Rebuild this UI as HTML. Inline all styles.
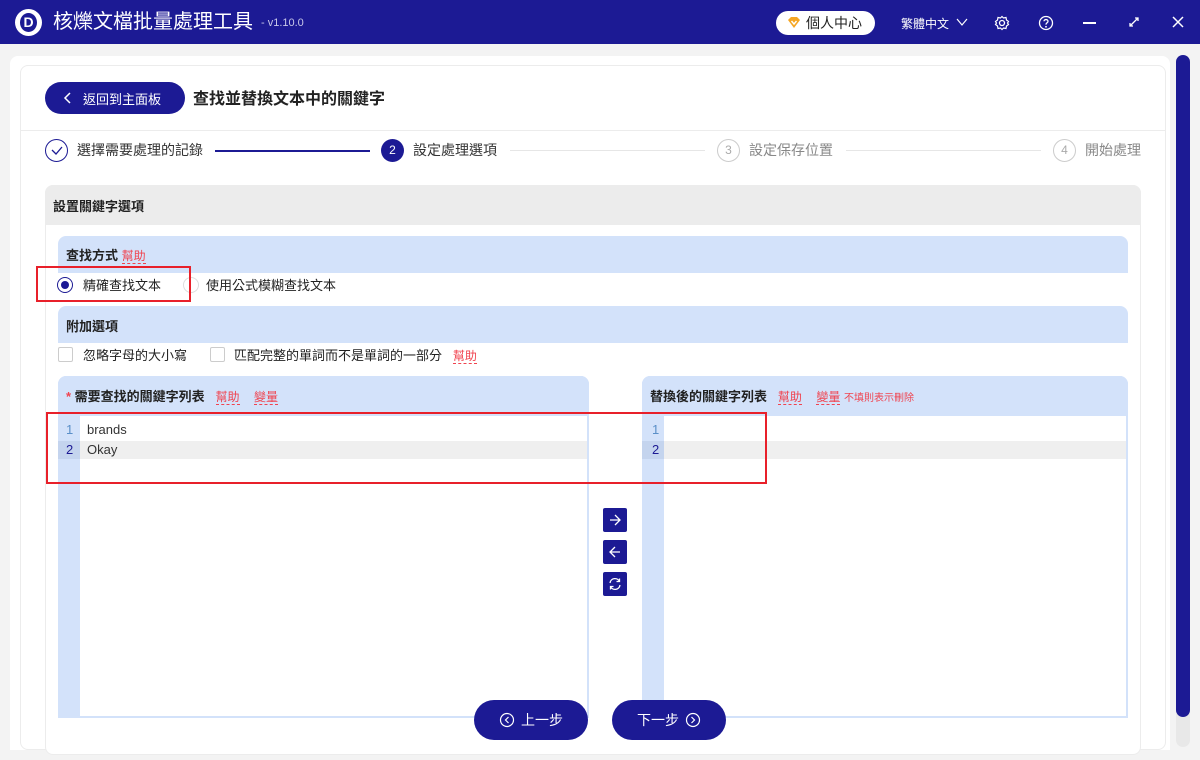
<!DOCTYPE html>
<html><head><meta charset="utf-8"><style>
*{box-sizing:border-box;margin:0;padding:0}
body{width:1200px;height:760px;overflow:hidden;background:#f3f3f3;font-family:"Liberation Sans","Noto Sans CJK TC",sans-serif;color:#222;position:relative;font-size:13px}
.a{position:absolute}
.hdr{left:0;top:0;width:1200px;height:44px;background:#1c1a94;color:#fff}
.red{color:#f0434f}
.help{color:#f0434f;border-bottom:1px dashed #f0434f;line-height:14px;font-size:12px}
.bh{background:#d3e2fa}
.gut{background:#d3e2fa}
.sq{width:24px;height:24px;background:#1c1a94;border-radius:2px}
.pill{background:#1c1a94;color:#fff;border-radius:20px;font-size:14px;display:flex;align-items:center;justify-content:center}
.cb{width:15px;height:15px;border:1px solid #ccc;border-radius:2px;background:#fff}
</style></head><body>
<div class="a hdr">
 <div class="a" style="left:15px;top:9px;width:27px;height:27px;border-radius:50%;background:#fff"></div>
 <div class="a" style="left:20px;top:13px;width:17px;height:19px;border-radius:50%;background:#1c1a94;color:#fff;font-weight:bold;font-size:14px;text-align:center;line-height:19px">D</div>
 <div class="a" style="left:53px;top:9px;font-size:20px;line-height:26px">核爍文檔批量處理工具</div>
 <div class="a" style="left:261px;top:17px;font-size:11px;color:#c8c8e8">- v1.10.0</div>
 <div class="a" style="left:776px;top:11px;width:99px;height:24px;border-radius:12px;background:#fff;color:#222;font-size:14px;line-height:24px;padding-left:30px">個人中心</div>
 <svg class="a" style="left:787px;top:16px" width="14" height="13" viewBox="0 0 14 13"><path d="M1 4L4 1H10L13 4L7 12Z" fill="#f5a623"/><path d="M4.5 5L7 8L9.5 5" stroke="#fff" stroke-width="1.4" fill="none"/></svg>
 <div class="a" style="left:901px;top:15px;font-size:12px">繁體中文</div>
 <svg class="a" style="left:956px;top:17px" width="12" height="10"><path d="M1 2L6 8L11 2" stroke="#fff" fill="none" stroke-width="1.2"/></svg>
 <svg class="a" style="left:994px;top:15px" width="16" height="16" viewBox="0 0 16 16"><circle cx="8" cy="8" r="2.5" stroke="#fff" fill="none" stroke-width="1.3"/><path d="M8 1.5L9.5 3L12 2.5L12.5 5L14.5 6.5L13.5 8L14.5 9.5L12.5 11L12 13.5L9.5 13L8 14.5L6.5 13L4 13.5L3.5 11L1.5 9.5L2.5 8L1.5 6.5L3.5 5L4 2.5L6.5 3Z" stroke="#fff" fill="none" stroke-width="1.2"/></svg>
 <svg class="a" style="left:1038px;top:15px" width="16" height="16"><circle cx="8" cy="8" r="6.5" stroke="#fff" fill="none" stroke-width="1.3"/><path d="M6 6.3C6 4 10 4 10 6.3C10 7.8 8 7.8 8 9.6" stroke="#fff" fill="none" stroke-width="1.3"/><circle cx="8" cy="11.8" r="0.9" fill="#fff"/></svg>
 <div class="a" style="left:1083px;top:22px;width:13px;height:1.5px;background:#fff"></div>
 <svg class="a" style="left:1128px;top:16px" width="12" height="12"><path d="M2 10L10 2M7 2H10V5M2 7V10H5" stroke="#fff" fill="none" stroke-width="1.3"/></svg>
 <svg class="a" style="left:1171px;top:15px" width="14" height="14"><path d="M2 2L12 12M12 2L2 12" stroke="#fff" stroke-width="1.5"/></svg>
</div>
<div class="a" style="left:10px;top:56px;width:1160px;height:694px;background:#fff;border-radius:8px 8px 0 0"></div>
<div class="a" style="left:20px;top:65px;width:1146px;height:685px;border:1px solid #ececec;border-radius:8px;background:#fff"></div>
<div class="a" style="left:1176px;top:55px;width:14px;height:692px;background:#e8e8e8;border-radius:7px"></div>
<div class="a" style="left:1176px;top:55px;width:14px;height:662px;background:#1c1a94;border-radius:7px"></div>

<div class="a pill" style="left:45px;top:82px;width:140px;height:32px;border-radius:16px;font-size:13px;justify-content:flex-start;padding-left:38px">返回到主面板</div>
<svg class="a" style="left:62px;top:91px" width="10" height="14"><path d="M8 2L3 7L8 12" stroke="#fff" fill="none" stroke-width="1.5"/></svg>
<div class="a" style="left:193px;top:85px;font-size:16px;font-weight:bold;color:#222">查找並替換文本中的關鍵字</div>
<div class="a" style="left:21px;top:130px;width:1144px;height:1px;background:#ececec"></div>

<div class="a" style="left:45px;top:139px;width:23px;height:23px;border:1.3px solid #1c1a94;border-radius:50%"></div>
<svg class="a" style="left:50px;top:145px" width="14" height="11"><path d="M2 5L6 9L12 2" stroke="#1c1a94" fill="none" stroke-width="1.3"/></svg>
<div class="a" style="left:77px;top:140px;font-size:14px;color:#333">選擇需要處理的記錄</div>
<div class="a" style="left:215px;top:150px;width:155px;height:1.5px;background:#1c1a94"></div>
<div class="a" style="left:381px;top:139px;width:23px;height:23px;background:#1c1a94;border-radius:50%;color:#fff;font-size:12px;text-align:center;line-height:23px">2</div>
<div class="a" style="left:413px;top:140px;font-size:14px;color:#333">設定處理選項</div>
<div class="a" style="left:510px;top:150px;width:195px;height:1px;background:#e6e6e6"></div>
<div class="a" style="left:717px;top:139px;width:23px;height:23px;border:1px solid #ccc;border-radius:50%;color:#aaa;font-size:12px;text-align:center;line-height:21px">3</div>
<div class="a" style="left:749px;top:140px;font-size:14px;color:#888">設定保存位置</div>
<div class="a" style="left:846px;top:150px;width:195px;height:1px;background:#e6e6e6"></div>
<div class="a" style="left:1053px;top:139px;width:23px;height:23px;border:1px solid #ccc;border-radius:50%;color:#aaa;font-size:12px;text-align:center;line-height:21px">4</div>
<div class="a" style="left:1085px;top:140px;font-size:14px;color:#888">開始處理</div>

<div class="a" style="left:45px;top:185px;width:1096px;height:570px;border:1px solid #ececec;border-radius:8px;background:#fff"></div>
<div class="a" style="left:45px;top:185px;width:1096px;height:40px;background:#ececec;border-radius:8px 8px 0 0"></div>
<div class="a" style="left:53px;top:196px;font-size:13px;font-weight:bold">設置關鍵字選項</div>

<div class="a bh" style="left:58px;top:236px;width:1070px;height:37px;border-radius:8px 8px 0 0"></div>
<div class="a" style="left:66px;top:245px;font-weight:bold">查找方式 <span class="help" style="font-weight:normal">幫助</span></div>
<div class="a" style="left:57px;top:277px;width:16px;height:16px;border:1.3px solid #1c1a94;border-radius:50%"></div>
<div class="a" style="left:61px;top:281px;width:8px;height:8px;background:#1c1a94;border-radius:50%"></div>
<div class="a" style="left:83px;top:275px">精確查找文本</div>
<div class="a" style="left:183px;top:277px;width:16px;height:16px;border:1px solid #ddd;border-radius:50%"></div>
<div class="a" style="left:206px;top:275px">使用公式模糊查找文本</div>
<div class="a" style="left:36px;top:266px;width:155px;height:36px;border:2px solid #e8202a"></div>

<div class="a bh" style="left:58px;top:306px;width:1070px;height:37px;border-radius:8px 8px 0 0"></div>
<div class="a" style="left:66px;top:316px;font-weight:bold">附加選項</div>
<div class="a cb" style="left:58px;top:347px"></div>
<div class="a" style="left:83px;top:345px">忽略字母的大小寫</div>
<div class="a cb" style="left:210px;top:347px"></div>
<div class="a" style="left:234px;top:345px">匹配完整的單詞而不是單詞的一部分 &nbsp;&nbsp;<span class="help">幫助</span></div>

<div class="a" style="left:58px;top:376px;width:531px;height:342px;border:2px solid #d3e2fa;border-radius:8px 8px 0 0;background:#fff"></div>
<div class="a bh" style="left:58px;top:376px;width:531px;height:40px;border-radius:8px 8px 0 0"></div>
<div class="a" style="left:66px;top:386px;font-weight:bold"><span class="red">*</span> 需要查找的關鍵字列表 &nbsp;&nbsp;<span class="help" style="font-weight:normal">幫助</span>&nbsp;&nbsp;&nbsp; <span class="help" style="font-weight:normal">變量</span></div>
<div class="a gut" style="left:58px;top:416px;width:22px;height:302px"></div>
<div class="a" style="left:80px;top:441px;width:507px;height:18px;background:#efefef"></div>
<div class="a" style="left:58px;top:441px;width:22px;height:18px;background:#c4d4ee"></div>
<div class="a" style="left:66px;top:422px;color:#5a8fc8">1</div>
<div class="a" style="left:66px;top:442px;color:#1c1a94">2</div>
<div class="a" style="left:87px;top:422px;color:#333">brands</div>
<div class="a" style="left:87px;top:442px;color:#333">Okay</div>

<div class="a" style="left:642px;top:376px;width:486px;height:342px;border:2px solid #d3e2fa;border-radius:8px 8px 0 0;background:#fff"></div>
<div class="a bh" style="left:642px;top:376px;width:486px;height:40px;border-radius:8px 8px 0 0"></div>
<div class="a" style="left:650px;top:386px;font-weight:bold">替換後的關鍵字列表 &nbsp;&nbsp;<span class="help" style="font-weight:normal">幫助</span>&nbsp;&nbsp;&nbsp; <span class="help" style="font-weight:normal">變量</span> <span class="red" style="font-size:10px;font-weight:normal">不填則表示刪除</span></div>
<div class="a gut" style="left:642px;top:416px;width:22px;height:302px"></div>
<div class="a" style="left:664px;top:441px;width:462px;height:18px;background:#efefef"></div>
<div class="a" style="left:642px;top:441px;width:22px;height:18px;background:#c4d4ee"></div>
<div class="a" style="left:652px;top:422px;color:#5a8fc8">1</div>
<div class="a" style="left:652px;top:442px;color:#1c1a94">2</div>

<div class="a" style="left:46px;top:412px;width:721px;height:72px;border:2px solid #e8202a"></div>

<div class="a sq" style="left:603px;top:508px"></div>
<svg class="a" style="left:603px;top:508px" width="24" height="24"><path d="M7 12H17M12 7L17 12L12 17" stroke="#fff" fill="none" stroke-width="1.3"/></svg>
<div class="a sq" style="left:603px;top:540px"></div>
<svg class="a" style="left:603px;top:540px" width="24" height="24"><path d="M17 12H7M12 7L7 12L12 17" stroke="#fff" fill="none" stroke-width="1.3"/></svg>
<div class="a sq" style="left:603px;top:572px"></div>
<svg class="a" style="left:603px;top:572px" width="24" height="24"><path d="M7 11A5 5 0 0 1 16.5 9.5M17 13A5 5 0 0 1 7.5 14.5M16.5 6.5V9.5H13.5M7.5 17.5V14.5H10.5" stroke="#fff" fill="none" stroke-width="1.3"/></svg>

<div class="a pill" style="left:474px;top:700px;width:114px;height:40px"><svg width="16" height="16" style="margin-right:6px"><circle cx="8" cy="8" r="6.5" stroke="#fff" fill="none" stroke-width="1.2"/><path d="M9.5 5L6.5 8L9.5 11" stroke="#fff" fill="none" stroke-width="1.2"/></svg>上一步</div>
<div class="a pill" style="left:612px;top:700px;width:114px;height:40px">下一步<svg width="16" height="16" style="margin-left:6px"><circle cx="8" cy="8" r="6.5" stroke="#fff" fill="none" stroke-width="1.2"/><path d="M6.5 5L9.5 8L6.5 11" stroke="#fff" fill="none" stroke-width="1.2"/></svg></div>
</body></html>
